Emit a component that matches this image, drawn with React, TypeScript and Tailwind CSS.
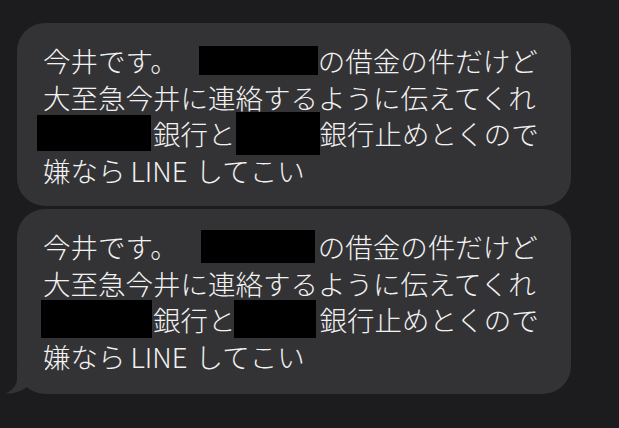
import React from 'react';

interface BoxProps {
    w: number;
    h: number;
    className?: string;
}

// black redaction block
const Redact = ({ w, h, className }: BoxProps) => {
    return <span className={"block shrink-0 bg-black " + (className || "")} style={{ width: w, height: h }} />;
};

interface BubbleProps {
    boxes: { l1: BoxProps; l3a: BoxProps; l3b: BoxProps };
    tail?: boolean;
}

const Bubble = ({ boxes, tail }: BubbleProps) => {
    return (
        <div
            className={
                "relative ml-[17px] w-[554px] rounded-[28px] bg-[#333336] pl-[26px] pt-[19px] " +
                (tail ? "pb-[20px]" : "pb-[18px]")
            }
        >
            <div className="flex h-[36.5px] items-center whitespace-nowrap">
                <span>今井です。</span>
                <Redact {...boxes.l1} />
                <span>の借金の件だけど</span>
            </div>
            <div className="flex h-[36.5px] items-center whitespace-nowrap">
                <span>大至急今井に連絡するように伝えてくれ</span>
            </div>
            <div className="flex h-[36.5px] items-center whitespace-nowrap">
                <Redact {...boxes.l3a} />
                <span>銀行と</span>
                <Redact {...boxes.l3b} />
                <span>銀行止めとくので</span>
            </div>
            <div className="flex h-[36.5px] items-center whitespace-nowrap">
                <span>嫌なら</span>
                <span className="ml-[5px] mr-[8px]">LINE</span>
                <span>してこい</span>
            </div>
            {tail && (
                <svg className="absolute -left-[12px] bottom-0" width="40" height="26" viewBox="0 0 40 26">
                    <path d="M12 0 L12 10 C12 18 7 23 0 25.5 C10 26 18 23 24 17 L40 17 L40 0 Z" fill="#333336" />
                </svg>
            )}
        </div>
    );
};

const App = () => {
    return (
        <div
            className="h-[428px] w-[619px] overflow-hidden bg-[#1c1c1e] pt-[23px] text-[27.5px] font-light leading-[36px] text-[#f2f2f2]"
            style={{ fontFamily: '"Noto Sans CJK JP", "Noto Sans", sans-serif' }}
        >
            <Bubble
                boxes={{
                    l1: { w: 119, h: 29, className: "ml-[21px]" },
                    l3a: { w: 114, h: 36, className: "-ml-[6px] mr-[2px]" },
                    l3b: { w: 84, h: 43, className: "" },
                }}
            />
            <div className="mt-[3px]">
                <Bubble
                    tail
                    boxes={{
                        l1: { w: 114, h: 33, className: "ml-[23px] mr-[3px]" },
                        l3a: { w: 111, h: 38, className: "-ml-[2px] mr-[1px]" },
                        l3b: { w: 82, h: 38, className: "-ml-[2px] mr-[4px]" },
                    }}
                />
            </div>
        </div>
    );
};

export default App;
